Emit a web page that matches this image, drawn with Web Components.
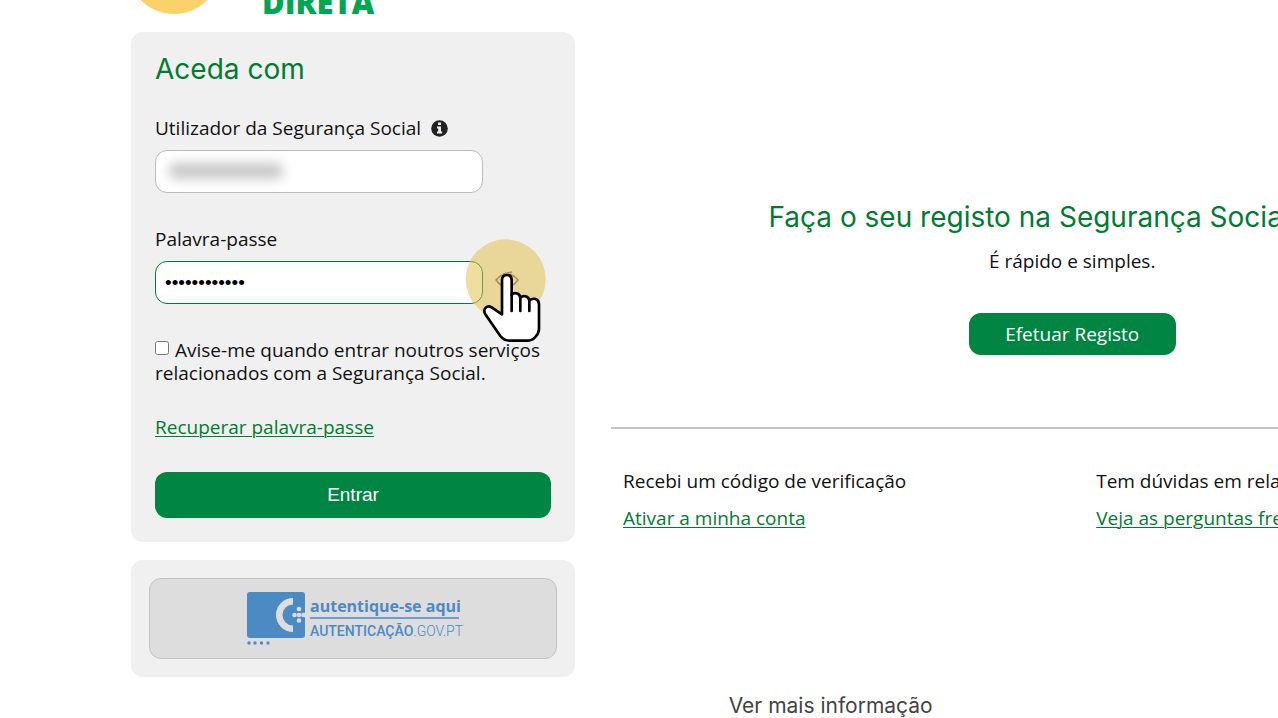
<!DOCTYPE html>
<html lang="pt">
<head>
<meta charset="utf-8">
<title>Segurança Social Direta</title>
<style>
body{margin:0;background:#fff;color:#111;font:400 19px/24px "Open Sans",sans-serif;overflow-x:hidden}
</style>
</head>
<body>
<ssd-page>
  <ssd-logo slot="header"></ssd-logo>
  <ssd-login slot="side"></ssd-login>
  <ssd-gov-auth slot="side"></ssd-gov-auth>
  <ssd-register slot="main"></ssd-register>
  <ssd-help slot="help" action="Ativar a minha conta">Recebi um código de verificação</ssd-help>
  <ssd-help slot="help" action="Veja as perguntas frequentes">Tem dúvidas em relação ao registo?</ssd-help>
  <span slot="footer">Ver mais informação</span>
</ssd-page>
<script>
const define = (name, html) => customElements.define(name, class extends HTMLElement {
  constructor() {
    super();
    this.attachShadow({ mode: 'open' }).innerHTML = html;
  }
  connectedCallback() {
    for (const el of this.shadowRoot.querySelectorAll('[data-attr]'))
      el.textContent = this.getAttribute(el.dataset.attr) || '';
  }
});

define('ssd-page', `<style>
:host{display:block;width:130%}
.grid{display:grid;grid-template-columns:444px 1fr;column-gap:36px;padding:0 128px 0 131px}
.side{display:flex;flex-direction:column;gap:18px}
.main{padding-top:169px}
hr{border:0;height:2px;background:#c4c4c4;margin:72px 0 40px}
.help{display:grid;grid-template-columns:1fr 1fr;gap:36px;padding:0 0 0 12px}
footer{margin-top:17px;text-align:center;font:400 21px/24px Inter,sans-serif;color:#444}
</style>
<header><slot name="header"></slot></header>
<div class="grid"><div class="side"><slot name="side"></slot></div>
<main class="main"><slot name="main"></slot><hr><div class="help"><slot name="help"></slot></div></main></div>
<footer><slot name="footer"></slot></footer>`);

define('ssd-logo', `<style>
:host{display:flex;align-items:flex-end;gap:40px;height:32px;padding-left:126px;overflow:hidden}
svg{display:block;flex:none;width:96px;height:96px;margin-bottom:18px}
b{font:800 31px/32px "Open Sans",sans-serif;color:#00a651;margin-bottom:14px}
</style><svg viewBox="0 0 96 96" aria-hidden="true"><circle cx="48" cy="49" r="47" fill="#fbd26a"/></svg><b>DIRETA</b>`);

define('ssd-field', `<style>
:host{display:block;margin-bottom:34px}
.label{display:flex;align-items:center;gap:10px;margin-bottom:10px}
.row{display:flex;align-items:center;gap:12px}
</style><div class="label"><slot name="label"></slot></div><div class="row"><slot></slot></div>`);

define('ssd-pointer', `<style>
:host{position:absolute;left:-30px;top:-33px;pointer-events:none}
svg{display:block;width:81px;height:110px}
</style><svg viewBox="75 39 243 330" aria-hidden="true">
<circle cx="197" cy="163" r="120" fill="#e1be41" fill-opacity=".5"/>
<path d="M186 268V165Q186 150 201 150Q215 150 215 165V210Q220 203 230 205Q240 208 241 218Q248 211 257 214Q267 217 268 227Q276 219 287 222Q297 226 297 238V312Q297 325 285 337Q276 347 261 347H209Q192 347 181 333L135 266Q130 255 137 248Q145 241 155 247Z" fill="#fff" stroke="#000" stroke-width="8" stroke-linejoin="round"/>
<path d="M215 208V258M241 217V258M268 226V258" fill="none" stroke="#000" stroke-width="8" stroke-linecap="round"/></svg>`);

define('ssd-button', `<style>
:host{display:block}
button{display:block;width:100%;height:var(--h,42px);border:0;border-radius:12px;background:#008542;color:#fff;font:inherit;padding:0}
</style><button type="button"><slot></slot></button>`);

define('ssd-login', `<style>
:host{display:block;background:#f0f0f0;border-radius:12px;padding:24px}
h1{font:400 28px/26px Inter,sans-serif;color:#007c32;margin:0 0 34px}
input[type=text],input[type=password]{box-sizing:border-box;width:328px;height:43px;border:1px solid #bbb;border-radius:12px;background:#fff;padding:0 9px;font:400 19px "Liberation Sans",sans-serif;color:#000;outline:0}
input[type=password]{border-color:#007c32}
.info{display:block;width:17px;height:17px}
.masked{position:relative;display:block}
.masked i{position:absolute;left:14px;top:13px;width:114px;height:16px;border-radius:6px;background:#c8c8c8;filter:blur(6px)}
.show{position:relative}
.eye{display:flex;align-items:flex-start;border:0;background:none;padding:0;width:24px;height:24px}
.eye svg{display:block}
.check{display:block;line-height:23px;margin:35px 0 30px}
.check input{width:14px;height:14px;margin:0 6px 0 0;vertical-align:2px}
a{color:#007c32;text-underline-offset:2px;text-decoration-thickness:1px}
ssd-button{--h:46px;margin-top:33px;font-family:"Liberation Sans",sans-serif}
</style>
<h1>Aceda com</h1>
<ssd-field><label slot="label" for="u">Utilizador da Segurança Social</label>
<svg slot="label" class="info" viewBox="0 0 17 17" aria-hidden="true"><circle cx="8.5" cy="8.5" r="8.3" fill="#222"/><path d="M7 2.5h3v2.6H7zM6 6.5h4v5h1.2v2H6v-2h1.2v-3H6z" fill="#f0f0f0"/></svg>
<span class="masked"><input id="u" type="text"><i></i></span></ssd-field>
<ssd-field><label slot="label" for="p">Palavra-passe</label>
<input id="p" type="password" value="123456789012">
<span class="show"><button class="eye" type="button" aria-label="Mostrar palavra-passe"><svg width="24" height="20" viewBox="0 0 24 20" fill="none" stroke="#666" stroke-width="1.5"><path d="M1 9Q6 3 12 3T23 9Q18 16 12 16T1 9Z"/><circle cx="12" cy="9" r="4"/><path d="M8 3Q12 2 17 1"/></svg></button><ssd-pointer></ssd-pointer></span></ssd-field>
<label class="check"><input type="checkbox">Avise-me quando entrar noutros serviços relacionados com a Segurança Social.</label>
<a href="#recuperar">Recuperar palavra-passe</a>
<ssd-button>Entrar</ssd-button>`);

define('ssd-gov-auth', `<style>
:host{display:block;background:#f0f0f0;border-radius:12px;padding:18px}
button{display:flex;box-sizing:border-box;width:100%;height:81px;align-items:center;justify-content:center;gap:5px;border:1px solid #c2c2c2;border-radius:12px;background:#ddd;padding:0;color:#4c8ac4;text-align:left}
svg{display:block;width:58px;height:54px}
.t{display:block;width:149px;white-space:nowrap}
.a{display:block;font:700 16px/22px "Open Sans",sans-serif;border-bottom:2px solid #6c9dcb}
.b{display:block;font:500 14px/24px Roboto,sans-serif}
.b span{font-weight:300}
</style><button type="button"><svg viewBox="0 0 58 54" aria-hidden="true"><rect width="58" height="46" rx="3" fill="#4c8ac4"/><path d="M46 6A17 17 0 0 0 46 40V33.500A10.500 10.500 0 0 1 46 12.500Z" fill="#ddd"/><g fill="#ddd"><circle cx="52" cy="17" r="2.300"/><circle cx="47.500" cy="23" r="2.300"/><circle cx="52" cy="23" r="2.300"/><circle cx="56.500" cy="23" r="2.300"/><circle cx="52" cy="28.500" r="2.300"/></g><g fill="#4c8ac4"><circle cx="2" cy="51" r="1.700"/><circle cx="8" cy="51" r="1.700"/><circle cx="14.500" cy="51" r="1.700"/><circle cx="21" cy="51" r="1.700"/></g></svg><span class="t"><span class="a">autentique-se aqui</span><span class="b">AUTENTICAÇÃO<span>.GOV.PT</span></span></span></button>`);

define('ssd-register', `<style>
:host{display:flex;flex-direction:column;align-items:center}
h2{font:400 28px/32px Inter,sans-serif;color:#007c32;margin:0 0 16px}
p{margin:0 0 40px}
ssd-button{width:207px}
</style><h2>Faça o seu registo na Segurança Social Direta</h2><p>É rápido e simples.</p><ssd-button>Efetuar Registo</ssd-button>`);

define('ssd-help', `<style>
:host{display:block}
p{margin:0 0 13px}
a{display:inline-block;color:#007c32;text-underline-offset:2px;text-decoration-thickness:1px}
</style><p><slot></slot></p><a href="#ajuda" data-attr="action"></a>`);
</script>
</body>
</html>
